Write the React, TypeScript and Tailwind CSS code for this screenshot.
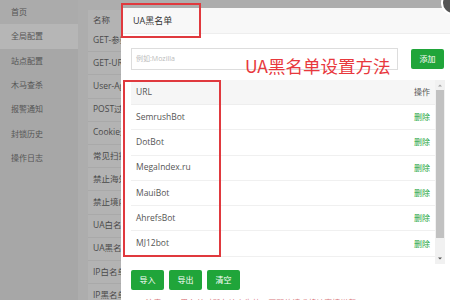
import React from "react";

const menu = ["首页", "全局配置", "站点配置", "木马查杀", "报警通知", "封锁历史", "操作日志"];

const rules = [
  "GET-参数过滤",
  "GET-URL过滤",
  "User-Agent过滤",
  "POST过滤",
  "Cookie过滤",
  "常见扫描器",
  "禁止海外访问",
  "禁止境内访问",
  "UA白名单",
  "UA黑名单",
  "IP白名单",
  "IP黑名单",
];

const bots = ["SemrushBot", "DotBot", "MegaIndex.ru", "MauiBot", "AhrefsBot", "MJ12bot"];

function GreenButton({ label }: { label: string }) {
  return (
    <button className="h-[20px] w-[33px] rounded-[2px] bg-[#20a53a] text-[8px] text-white">
      {label}
    </button>
  );
}

export default function App() {
  return (
    <div className="relative h-[300px] w-[450px] overflow-hidden bg-[#adadad] font-['Open_Sans','Noto_Sans_CJK_SC',sans-serif]">
      {/* page behind the mask */}
      <div className="flex h-full">
        <aside className="w-[78px] bg-[#a7a7a7]">
          {menu.map((item, i) => (
            <div
              key={item}
              className={`flex h-[24.3px] items-center pl-[11px] text-[8px] text-[#555] ${
                i === 1 ? "bg-[#b6b6b6]" : i === 0 ? "bg-[#ababab]" : ""
              }`}
            >
              {item}
            </div>
          ))}
        </aside>
        <main className="flex-1 pl-[10px] pt-[10px]">
          <div className="bg-[#b3b3b3]">
            <div className="flex h-[19px] items-end pb-[2px] pl-[5px] text-[8.5px] text-[#4a4a4a]">
              名称
            </div>
            {rules.map((r) => (
              <div
                key={r}
                className="flex h-[23.2px] items-center border-b border-[#a9a9a9] pl-[5px] text-[8.5px] text-[#4a4a4a]"
              >
                {r}
              </div>
            ))}
          </div>
        </main>
      </div>

      {/* layer dialog */}
      <div className="absolute left-[121px] top-[8px] w-[334px] bg-white">
        <div className="flex h-[26px] items-center border-b border-[#eeeeee] bg-[#f8f8f8] pl-[12px] text-[9px] text-[#333]">
          UA黑名单
        </div>
        <div className="px-[10px] pt-[14px]">
          <div className="flex h-[22px] items-center gap-[13px]">
            <div className="flex h-full w-[267px] items-center border border-[#dddddd] pl-[4px] text-[7px] text-[#bbbbbb]">
              例如:Mozilla
            </div>
            <GreenButton label="添加" />
          </div>

          <div className="mt-[10px] flex h-[184px]">
            <div className="flex-1 overflow-hidden">
              <div className="flex h-[25px] items-center justify-between border-b border-[#eeeeee] bg-[#f6f6f6] pl-[5px] pr-[5px] text-[8.5px] text-[#555]">
                <span>URL</span>
                <span className="text-[8px]">操作</span>
              </div>
              {bots.map((b) => (
                <div
                  key={b}
                  className="flex h-[25.3px] items-center justify-between border-b border-[#f0f0f0] pl-[5px] pr-[5px] text-[8.5px]"
                >
                  <span className="text-[#555]">{b}</span>
                  <span className="text-[8px] text-[#20a53a]">删除</span>
                </div>
              ))}
            </div>
            {/* scrollbar */}
            <div className="flex w-[10px] flex-col items-center bg-[#f1f1f1]">
              <svg width="10" height="10" viewBox="0 0 10 10">
                <path d="M3 6.5 L5 4.5 L7 6.5 Z" fill="#a3a3a3" />
              </svg>
              <div className="h-[148px] w-[8px] bg-[#c1c1c1]" />
              <div className="flex-1" />
              <svg width="10" height="10" viewBox="0 0 10 10">
                <path d="M3 3.5 L5 5.5 L7 3.5 Z" fill="#505050" />
              </svg>
            </div>
          </div>

          <div className="mt-[6px] flex gap-[5px]">
            <GreenButton label="导入" />
            <GreenButton label="导出" />
            <GreenButton label="清空" />
          </div>
          <div className="mt-[7px] pl-[8px] text-[8px] text-[#d9777b]">
            * 注意：UA黑名单对所有站点生效，匹配的请求将被直接拦截
          </div>
        </div>
      </div>

      {/* close button of the layer */}
      <div className="absolute left-[441px] top-[-9px] h-[24px] w-[24px] rounded-full border-2 border-white bg-[#555]" />

      {/* red annotations */}
      <div className="absolute left-[121px] top-[3px] h-[35px] w-[80px] border-2 border-[#e0393e]" />
      <div className="absolute left-[123px] top-[80px] h-[177px] w-[98px] border-2 border-[#e0393e]" />
      <div className="absolute left-[245px] top-[56px] font-['Noto_Sans_CJK_SC',sans-serif] text-[17.5px] leading-[20px] text-[#e8383d]">
        UA黑名单设置方法
      </div>
    </div>
  );
}
